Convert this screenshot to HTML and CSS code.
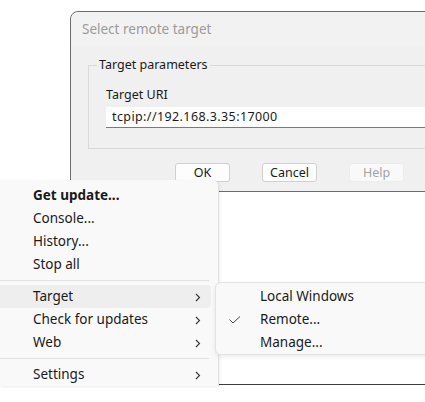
FILE: index.html
```html
<!DOCTYPE html>
<html lang="en">
<head>
    <meta charset="UTF-8">
    <meta name="viewport" content="width=device-width, initial-scale=1.0">
    <title>Select remote target</title>
    <link rel="stylesheet" href="styles.css">
</head>
<body>
    <div class="backdrop"></div>

    <div class="dialog">
        <div class="dialog-title">Select remote target</div>
        <div class="dialog-body">
            <fieldset class="group">
                <legend>Target parameters</legend>
                <div class="field-label">Target URI</div>
                <div class="uri-input">tcpip://192.168.3.35:17000</div>
            </fieldset>
            <div class="dialog-buttons">
                <button class="btn">OK</button>
                <button class="btn">Cancel</button>
                <button class="btn disabled">Help</button>
            </div>
        </div>
    </div>

    <div class="menu">
        <div class="menu-item bold">Get update...</div>
        <div class="menu-item">Console...</div>
        <div class="menu-item">History...</div>
        <div class="menu-item">Stop all</div>
        <div class="menu-sep"></div>
        <div class="menu-item active">Target
            <svg class="chevron" width="6" height="9" viewBox="0 0 6 9"><path d="M1 1 L4.5 4.5 L1 8" fill="none" stroke="#333" stroke-width="1.1"/></svg>
        </div>
        <div class="menu-item">Check for updates
            <svg class="chevron" width="6" height="9" viewBox="0 0 6 9"><path d="M1 1 L4.5 4.5 L1 8" fill="none" stroke="#333" stroke-width="1.1"/></svg>
        </div>
        <div class="menu-item">Web
            <svg class="chevron" width="6" height="9" viewBox="0 0 6 9"><path d="M1 1 L4.5 4.5 L1 8" fill="none" stroke="#333" stroke-width="1.1"/></svg>
        </div>
        <div class="menu-sep"></div>
        <div class="menu-item">Settings
            <svg class="chevron" width="6" height="9" viewBox="0 0 6 9"><path d="M1 1 L4.5 4.5 L1 8" fill="none" stroke="#333" stroke-width="1.1"/></svg>
        </div>
    </div>

    <div class="submenu">
        <div class="sub-item">Local Windows</div>
        <div class="sub-item">
            <svg class="check" width="12" height="8" viewBox="0 0 12 8"><path d="M0.5 3.5 L4 7 L11 0.5" fill="none" stroke="#444" stroke-width="1"/></svg>
            Remote...
        </div>
        <div class="sub-item">Manage...</div>
    </div>
</body>
</html>
```

FILE: styles.css
```css
body {
    margin: 0;
    width: 425px;
    height: 402px;
    overflow: hidden;
    background: #ffffff;
    font-family: "Noto Sans", "Open Sans", sans-serif;
    color: #1a1a1a;
    position: relative;
}

/* windows behind the menu */
.backdrop {
    position: absolute;
    left: 70px;
    top: 191px;
    width: 400px;
    height: 193px;
    background: #ffffff;
    border-bottom: 1px solid #3c3c3c;
}

.dialog {
    position: absolute;
    left: 70px;
    top: 11px;
    width: 400px;
    background: #f0f0f0;
    border: 1px solid #6b6b6b;
    border-top-left-radius: 8px;
}

.dialog-title {
    height: 34px;
    line-height: 34px;
    padding-left: 11px;
    font-size: 13.5px;
    color: #9b9b9b;
    background: #f2f2f2;
    border-top-left-radius: 8px;
}

.dialog-body {
    padding: 0 0 9px 17px;
    font-size: 12.5px;
}

.group {
    margin: 11px 0 0 0;
    padding: 14px 17px 20px 17px;
    border: 1px solid #d9d9d9;
    width: 400px;
}

.group legend {
    padding: 0 2px;
    margin-left: -9px;
    line-height: 16px;
    color: #1a1a1a;
}

.field-label {
    line-height: 16px;
}

.uri-input {
    margin-top: 4px;
    height: 20px;
    line-height: 20px;
    padding-left: 6px;
    background: #ffffff;
    border-bottom: 1px solid #7a7a7a;
    color: #1a1a1a;
    letter-spacing: 0.4px;
}

.dialog-buttons {
    display: flex;
    gap: 32px;
    margin-top: 14px;
    padding-left: 87px;
}

.btn {
    width: 55px;
    height: 19px;
    padding: 0;
    font-family: inherit;
    font-size: 12.5px;
    color: #1a1a1a;
    background: #fdfdfd;
    border: 1px solid #d0d0d0;
    border-radius: 3px;
}

.btn.disabled {
    color: #a3a3a3;
    border-color: #ececec;
    background: #f9f9f9;
}

.menu {
    position: absolute;
    left: 0;
    top: 180px;
    width: 219px;
    height: 206px;
    padding-top: 4px;
    box-sizing: border-box;
    background: #f9f9f9;
    border-right: 1px solid #e3e3e3;
    border-top-right-radius: 6px;
    box-shadow: 1px 1px 3px rgba(0, 0, 0, 0.08);
    font-size: 13.5px;
}

.menu-item {
    height: 23px;
    line-height: 23px;
    padding-left: 33px;
    margin-right: 7px;
    position: relative;
}

.menu-item.bold {
    font-weight: bold;
}

.menu-item.active {
    background: #eeeeee;
    border-radius: 0 4px 4px 0;
}

.chevron {
    position: absolute;
    left: 195px;
    top: 8px;
}

.menu-sep {
    height: 1px;
    background: #e2e2e2;
    margin: 4px 9px 4px 0;
}

.submenu {
    position: absolute;
    left: 215px;
    top: 282px;
    width: 230px;
    height: 73px;
    padding-top: 2px;
    box-sizing: border-box;
    background: #f9f9f9;
    border: 1px solid #e3e3e3;
    border-radius: 6px 0 0 6px;
    box-shadow: 0 2px 4px rgba(0, 0, 0, 0.08);
    font-size: 13.5px;
}

.sub-item {
    height: 23px;
    line-height: 23px;
    padding-left: 44px;
    position: relative;
}

.check {
    position: absolute;
    left: 13px;
    top: 8px;
}
```
